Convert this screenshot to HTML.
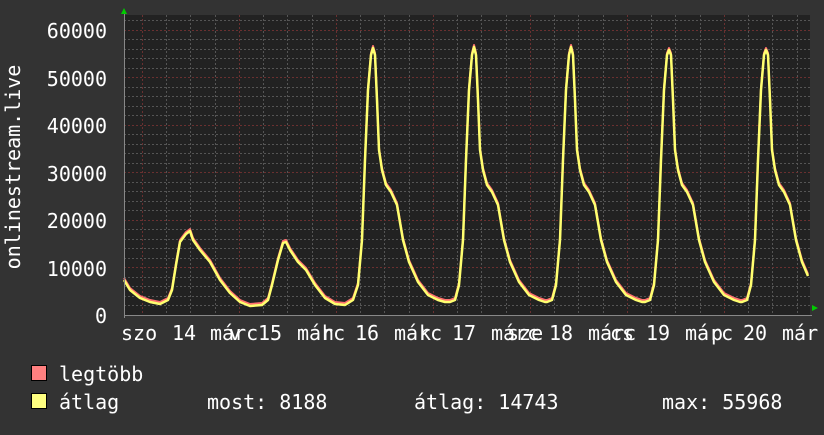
<!DOCTYPE html>
<html><head><meta charset="utf-8"><style>
body{margin:0;background:#333333;width:824px;height:430px;overflow:hidden}
text{font-family:"DejaVu Sans Mono","Liberation Mono",monospace;font-size:20px;fill:#fff}
</style></head><body>
<svg width="824" height="430" xmlns="http://www.w3.org/2000/svg">
<rect width="824" height="430" fill="#333333"/>
<rect x="124" y="15" width="686" height="300" fill="#222222"/>
<g stroke="#555" stroke-width="1" stroke-dasharray="2,2">
<line x1="124" x2="810" y1="305.5" y2="305.5"/><line x1="124" x2="810" y1="296.5" y2="296.5"/><line x1="124" x2="810" y1="286.5" y2="286.5"/><line x1="124" x2="810" y1="277.5" y2="277.5"/>
<line x1="124" x2="810" y1="258.5" y2="258.5"/><line x1="124" x2="810" y1="248.5" y2="248.5"/><line x1="124" x2="810" y1="239.5" y2="239.5"/><line x1="124" x2="810" y1="229.5" y2="229.5"/>
<line x1="124" x2="810" y1="210.5" y2="210.5"/><line x1="124" x2="810" y1="201.5" y2="201.5"/><line x1="124" x2="810" y1="191.5" y2="191.5"/><line x1="124" x2="810" y1="182.5" y2="182.5"/>
<line x1="124" x2="810" y1="163.5" y2="163.5"/><line x1="124" x2="810" y1="153.5" y2="153.5"/><line x1="124" x2="810" y1="144.5" y2="144.5"/><line x1="124" x2="810" y1="134.5" y2="134.5"/>
<line x1="124" x2="810" y1="115.5" y2="115.5"/><line x1="124" x2="810" y1="106.5" y2="106.5"/><line x1="124" x2="810" y1="96.5" y2="96.5"/><line x1="124" x2="810" y1="87.5" y2="87.5"/>
<line x1="124" x2="810" y1="68.5" y2="68.5"/><line x1="124" x2="810" y1="58.5" y2="58.5"/><line x1="124" x2="810" y1="49.5" y2="49.5"/><line x1="124" x2="810" y1="39.5" y2="39.5"/><line x1="124" x2="810" y1="20.5" y2="20.5"/>
<line y1="15" y2="315" x1="166.5" x2="166.5"/><line y1="15" y2="315" x1="190.5" x2="190.5"/><line y1="15" y2="315" x1="215.5" x2="215.5"/>
<line y1="15" y2="315" x1="263.5" x2="263.5"/><line y1="15" y2="315" x1="287.5" x2="287.5"/><line y1="15" y2="315" x1="312.5" x2="312.5"/>
<line y1="15" y2="315" x1="360.5" x2="360.5"/><line y1="15" y2="315" x1="384.5" x2="384.5"/><line y1="15" y2="315" x1="409.5" x2="409.5"/>
<line y1="15" y2="315" x1="457.5" x2="457.5"/><line y1="15" y2="315" x1="481.5" x2="481.5"/><line y1="15" y2="315" x1="506.5" x2="506.5"/>
<line y1="15" y2="315" x1="554.5" x2="554.5"/><line y1="15" y2="315" x1="578.5" x2="578.5"/><line y1="15" y2="315" x1="603.5" x2="603.5"/>
<line y1="15" y2="315" x1="651.5" x2="651.5"/><line y1="15" y2="315" x1="675.5" x2="675.5"/><line y1="15" y2="315" x1="700.5" x2="700.5"/>
<line y1="15" y2="315" x1="748.5" x2="748.5"/><line y1="15" y2="315" x1="772.5" x2="772.5"/><line y1="15" y2="315" x1="797.5" x2="797.5"/>
</g>
<g stroke="#6a3030" stroke-width="1" stroke-dasharray="2,2">
<line x1="124" x2="810" y1="267.5" y2="267.5"/><line x1="124" x2="810" y1="220.5" y2="220.5"/><line x1="124" x2="810" y1="172.5" y2="172.5"/><line x1="124" x2="810" y1="125.5" y2="125.5"/><line x1="124" x2="810" y1="77.5" y2="77.5"/><line x1="124" x2="810" y1="30.5" y2="30.5"/>
<line y1="15" y2="315" x1="142.5" x2="142.5"/><line y1="15" y2="315" x1="239.5" x2="239.5"/><line y1="15" y2="315" x1="336.5" x2="336.5"/><line y1="15" y2="315" x1="433.5" x2="433.5"/><line y1="15" y2="315" x1="530.5" x2="530.5"/><line y1="15" y2="315" x1="627.5" x2="627.5"/><line y1="15" y2="315" x1="724.5" x2="724.5"/>
</g>
<defs>
<path id="c" fill="none" stroke-linejoin="round" d="M124,280 L130,290 L140,298 L150,302 L160,304 L168,300 L172,290 L176,265 L180,242 L186,234 L190,231 L193,240 L200,250 L210,262 L220,280 L230,293 L240,302 L250,306 L262,305 L268,300 L272,285 L278,260 L283,243 L286,242 L290,250 L298,262 L306,270 L315,285 L325,298 L335,304 L345,305
L353,300 L358,285 L362,240 L365,160 L368,90 L371,55 L373,48 L375,55 L377,100 L379,150 L382,170 L386,185 L391,192 L397,205 L403,240 L409,262 L418,282 L428,295 L438,300 L445,302
L450,302 L455,300 L459,285 L463,240 L466,160 L469,90 L472,55 L474,47 L476,55 L478,100 L480,150 L483,170 L487,185 L492,192 L498,205 L504,240 L510,262 L519,282 L529,295 L539,300 L545,302
L547,302 L552,300 L556,285 L560,240 L563,160 L566,90 L569,55 L571,47 L573,55 L575,100 L577,150 L580,170 L584,185 L589,192 L595,205 L601,240 L607,262 L616,282 L626,295 L636,300 L642,302
L645,302 L650,300 L654,285 L658,240 L661,160 L664,90 L667,55 L669,50 L671,55 L673,100 L675,150 L678,170 L682,185 L687,192 L693,205 L699,240 L705,262 L714,282 L724,295 L734,300 L740,302
L742,302 L747,300 L751,285 L755,240 L758,160 L761,90 L764,55 L766,50 L768,55 L770,100 L772,150 L775,170 L779,185 L784,192 L790,205 L796,240 L802,262 L808,276"/>
</defs>
<use href="#c" fill="none" stroke="#ff7070" stroke-width="2" transform="translate(0,-2)"/>
<use href="#c" fill="none" stroke="#ffff70" stroke-width="2.5"/>
<line x1="124" x2="812" y1="315.5" y2="315.5" stroke="#888"/>
<line x1="124.5" x2="124.5" y1="12" y2="318" stroke="#888"/>
<polygon points="121,14 127,14 124,8" fill="#00cc00"/>
<polygon points="812,305 812,311 818,308" fill="#00cc00"/>
<g text-anchor="end">
<text x="107" y="38">60000</text><text x="107" y="86">50000</text><text x="107" y="133">40000</text><text x="107" y="181">30000</text><text x="107" y="228">20000</text><text x="107" y="276">10000</text><text x="107" y="323">0</text>
</g>
<text transform="translate(20,167) rotate(-90)" text-anchor="middle">onlinestream.live</text>
<text x="121" y="340">szo</text>
<text x="172" y="340">14</text><text x="210" y="340">márc</text><text x="229" y="340">v</text>
<text x="258" y="340">15</text><text x="297" y="340">márc</text><text x="322" y="340">h</text>
<text x="355" y="340">16</text><text x="394" y="340">márc</text><text x="419" y="340">k</text>
<text x="452" y="340">17</text><text x="491" y="340">márc</text><text x="507" y="340">sze</text>
<text x="549" y="340">18</text><text x="588" y="340">márc</text><text x="610" y="340">cs</text>
<text x="646" y="340">19</text><text x="685" y="340">márc</text><text x="711" y="340">p</text>
<text x="743" y="340">20</text><text x="782" y="340">már</text>
<rect x="31.5" y="365.5" width="15" height="15" fill="#ff8080" stroke="#000"/>
<rect x="31.5" y="393.5" width="15" height="15" fill="#ffff80" stroke="#000"/>
<text x="59" y="381">legtöbb</text>
<text x="59" y="409">átlag</text>
<text x="207" y="409">most: 8188</text>
<text x="414" y="409">átlag: 14743</text>
<text x="662" y="409">max: 55968</text>
</svg>
</body></html>
